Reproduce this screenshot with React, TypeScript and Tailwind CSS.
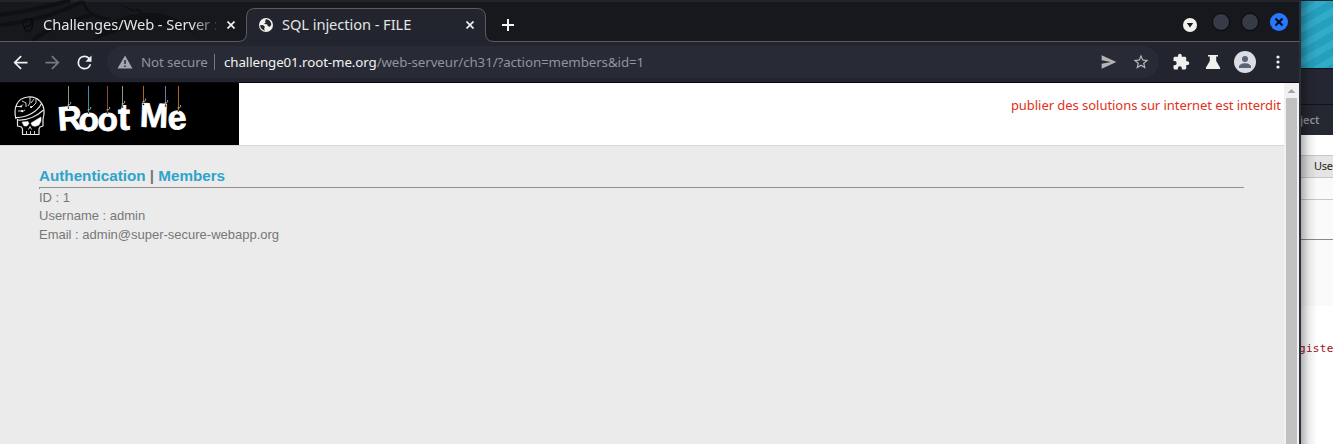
import type { ReactNode } from "react";

const HANGING = [
  { ch: "R", x: 58.5, y: 130.5, size: 33.5, rot: -4, sx: 68.5, sy: 107, color: "#7c9a86" },
  { ch: "o", x: 78.5, y: 131, size: 33.5, rot: 0, sx: 88.5, sy: 112, color: "#3f8da8" },
  { ch: "o", x: 97.5, y: 131, size: 33.5, rot: 0, sx: 107.5, sy: 112, color: "#8a4a35" },
  { ch: "t", x: 118, y: 130, size: 36, rot: 0, sx: 122.5, sy: 106, color: "#8b9a80" },
  { ch: "M", x: 139.5, y: 126.5, size: 34, rot: 2, sx: 143.5, sy: 103.5, color: "#b0651f" },
  { ch: "", x: 0, y: 0, size: 33, rot: 0, sx: 165.5, sy: 105, color: "#7f74a8" },
  { ch: "e", x: 168.5, y: 130, size: 34, rot: -5, sx: 178.5, sy: 110, color: "#b0651f" },
];

function Logo() {
  return (
    <svg width="239" height="62" viewBox="0 83 239 62" className="block shrink-0 bg-black">
      <g fill="none" stroke="#e8e8e8" strokeWidth="1.200" strokeLinejoin="round">
        <path d="M16 119C13 108 17 98 28 97c10-1 17 7 16 17l-1 5v7l-3 1-1 2v5.500H22.500V129l-1-2-4-1v-7" />
        <path d="M15.500 117.500C27 118 38 111 41.500 103.500M17.500 120C28 121 38 115 43.500 110" />
        <path d="M16 106.500h5l2-2m-5 6.500h5M22 101l4 2v4m4-10v6l-2 3m6-7l-3 4m5-5v5l-5 5m-9 4l3-2" strokeWidth=".9" />
        <path d="M26.500 134v-3m4 3v-3m4 3v-3M28.500 129.500l1.500-3 1.500 3" strokeWidth=".9" />
        <path d="M22 122l6-.5 1 2-2 2.500h-3zM31 123l10-6v4l-2 4-4 1.500-3-1z" fill="#fff" strokeWidth=".5" />
      </g>
      <g fill="#fff">
        <circle cx="21" cy="106.500" r="1" />
        <circle cx="22" cy="111" r="1" />
        <circle cx="31" cy="107" r="1" />
      </g>
      {HANGING.map((h, i) => (
        <g key={i}>
          <text x={h.x} y={h.y} fontSize={h.size} fill="#fff" stroke="#fff" strokeWidth=".8" fontWeight="700" className="font-['Liberation_Sans',sans-serif]" transform={`rotate(${h.rot} ${h.x} ${h.y})`}>{h.ch}</text>
          <path d={`M${h.sx} 86V${h.sy}`} stroke={h.color} />
          <path d={`M${h.sx - 1} ${h.sy - 2}q4 0 3-3`} stroke="#ccc" fill="none" strokeWidth=".8" />
          <circle cx={h.sx} cy={h.sy + 1} r=".8" fill="#000" />
        </g>
      ))}
    </svg>
  );
}

function Glyph({ size = 20, className = "", children }: { size?: number; className?: string; children: ReactNode }) {
  return <svg width={size} height={size} viewBox="0 0 24 24" fill="currentColor" className={`block shrink-0 ${className}`}>{children}</svg>;
}

function Close() {
  return (
    <svg width="8" height="8" viewBox="0 0 8 8" className="block shrink-0 text-[#f0f0ee]">
      <path d="M.5.5l7 7m0-7l-7 7" stroke="currentColor" strokeWidth="1.7" />
    </svg>
  );
}

function TabStrip() {
  return (
    <header className="relative h-[42px] bg-[#17181d]">
      <svg width="1300" height="42" className="absolute inset-0 block">
        <rect width="1300" height="2" fill="#23242a" />
        <g fill="none" stroke="#0f1013">
          <path d="M0 15Q42 9 70 0M0 25Q45 20 82 2M32 41Q53 24 92 15" strokeWidth="4" />
          <path d="M83 1Q87 18 111 19" strokeWidth="3" />
        </g>
        <path d="M112 21Q150 5 178 20L196 34Q158 15 93 40Q106 27 112 21ZM120 4l13 8 5-4 6 6" fill="#101114" />
        <path d="M0 41.5H238Q246.500 41.500 246.500 33V17Q246.500 8.500 255 8.500H477Q485.500 8.500 485.500 17V33Q485.500 41.500 494 41.500H1300V43H0Z" fill="#22242e" stroke="#5b5c60" />
        <path d="M0 41.500H238M494 41.500H1300" stroke="#5b5c60" />
      </svg>
      <div className="relative flex h-full items-center pt-2 font-['Noto_Sans',sans-serif] text-[14.67px] leading-5 text-[#e5e5e3]">
        <svg width="12" height="14" viewBox="0 0 12 14" className="ml-[22px] block shrink-0" fill="none" stroke="#08080a" strokeWidth="1.1"><path d="M2 9C-1 3 4 0 8 1c4 2 3 6 2 9l-2 3H4L2 9zm0 0c4 0 7-2 8-5" /></svg>
        <div className="mb-[2px] ml-[9px] w-[173px] overflow-hidden tracking-[-0.05px] whitespace-nowrap [mask-image:linear-gradient(to_right,black_148px,transparent_180px)]">Challenges/Web - Server :</div>
        <div className="ml-[11px]"><Close /></div>
        <svg width="14" height="14" viewBox="0 0 14 14" className="ml-[24px] block shrink-0"><circle cx="7" cy="7" r="7" fill="#f1f1ef" /><path d="M7 1.300l-1 2 .8 1-1.800 1.700 3 .2 1 2 2 .5 1.300-2c0-2-1-4-3-5zM1.300 7l3 .3L6 9l-1 1.500 1 2C3 12 1 9.800 1.300 7z" fill="#22242e" /></svg>
        <div className="mb-[2px] ml-[9px] w-[175px] tracking-[-0.07px] whitespace-nowrap">SQL injection - FILE</div>
        <div className="ml-[9px]"><Close /></div>
        <svg width="12" height="12" viewBox="0 0 12 12" className="ml-[28px] block shrink-0"><path d="M6 0v12M0 6h12" stroke="#f4f4f2" strokeWidth="2" /></svg>
      </div>
      <div className="absolute top-0 right-0 flex h-[44px] items-center gap-[11px] pr-[11px]">
        <svg width="14" height="14" viewBox="0 0 14 14" className="mt-[6px] mr-[4px] block"><circle cx="7" cy="7" r="7" fill="#f1f1ee" /><path d="M3.800 5h6.400L7 9.500z" fill="#17181d" /></svg>
        <div className="size-[18px] rounded-full border border-[#07080a] bg-[#363b47]" />
        <div className="size-[18px] rounded-full border border-[#07080a] bg-[#363b47]" />
        <svg width="18" height="18" viewBox="0 0 18 18" className="block"><circle cx="9" cy="9" r="9" fill="#2777ff" /><path d="M5.500 5.500l7 7m0-7l-7 7" stroke="#050d20" strokeWidth="2.200" /></svg>
      </div>
    </header>
  );
}

function Toolbar() {
  return (
    <div className="flex h-[41px] items-center border-b border-[#08090d] bg-[#22242e] font-['Noto_Sans',sans-serif] text-[13.33px] tracking-[-0.1px] whitespace-nowrap">
      <Glyph size={21} className="ml-[10px] text-[#f0f0ee]"><path d="M20 11H7.800l5.600-5.600L12 4l-8 8 8 8 1.400-1.400L7.800 13H20z" /></Glyph>
      <Glyph size={21} className="ml-[11px] text-[#77787d]"><path d="M4 13h12.200l-5.600 5.600L12 20l8-8-8-8-1.400 1.400 5.600 5.600H4z" /></Glyph>
      <Glyph size={21} className="ml-[11px] text-[#f0f0ee]"><path d="M17.650 6.350A7.960 7.960 0 0012 4a8 8 0 107.730 10h-2.080A6 6 0 1112 6c1.660 0 3.140.69 4.220 1.780L13 11h7V4z" /></Glyph>
      <div className="ml-[12px] flex h-8 w-[1052px] items-center rounded-full bg-[#282a36]">
        <svg width="16" height="14" viewBox="0 0 16 14" className="ml-[10px] block"><path d="M8 .5L15.500 13.500H.5z" fill="#a5a6ac" /><path d="M8 5v4m0 1.500V12" stroke="#282a36" strokeWidth="1.500" /></svg>
        <span className="mt-[2px] ml-2 w-[67px] text-[#92949c]">Not secure</span>
        <span className="ml-[6px] h-4 w-px bg-[#777980]" />
        <span className="mt-[2px] ml-[9px] text-[#92949c]"><span className="text-[#f3f3f1]">challenge01.root-me.org</span>/web-serveur/ch31/?action=members&amp;id=1</span>
        <Glyph size={16} className="ml-auto text-[#b5b5b5]"><path d="M1 22L23 12 1 2v7.500L15 12 1 14.500z" /></Glyph>
        <Glyph size={18} className="mr-[9px] ml-[15px] text-[#b9b9b9]"><path d="M22 9.240l-7.190-.62L12 2 9.190 8.630 2 9.240l5.460 4.730L5.820 21 12 17.270 18.180 21l-1.630-7.030L22 9.240zM12 15.400l-3.760 2.270 1-4.280-3.320-2.880 4.380-.38L12 6.100l1.710 4.040 4.380.38-3.320 2.880 1 4.280z" /></Glyph>
      </div>
      <Glyph size={18} className="ml-[13px] text-[#f0f0ee]"><path d="M20.500 11H19V7c0-1.100-.9-2-2-2h-4V3.500a2.500 2.500 0 00-5 0V5H4c-1.100 0-2 .9-2 2v3.800h1.500a2.700 2.700 0 010 5.400H2V20c0 1.100.9 2 2 2h3.800v-1.500a2.700 2.700 0 015.400 0V22H17c1.100 0 2-.9 2-2v-4h1.500a2.500 2.500 0 000-5z" /></Glyph>
      <svg width="16" height="16" viewBox="0 0 16 16" className="ml-[15px] block shrink-0"><path d="M3 1h10v1.500h-1.800V7L15 13.500c.5 1 0 1.500-.8 1.500H1.800c-.8 0-1.300-.5-.8-1.500L4.800 7V2.500H3z" fill="#f0f0ee" /></svg>
      <svg width="22" height="22" viewBox="0 0 22 22" className="ml-[13px] block shrink-0"><circle cx="11" cy="11" r="11" fill="#dadde3" /><circle cx="11" cy="8" r="3" fill="#596575" /><path d="M5 17v-1.500c0-2 3-3.300 6-3.300s6 1.300 6 3.300V17z" fill="#596575" /></svg>
      <svg width="4" height="14" viewBox="0 0 4 14" className="ml-[20px] block shrink-0" fill="#f0f0ee"><circle cx="2" cy="2" r="1.600" /><circle cx="2" cy="7" r="1.600" /><circle cx="2" cy="12" r="1.600" /></svg>
    </div>
  );
}

function Browser() {
  return (
    <div className="flex h-full w-[1301px] shrink-0 flex-col border-r-2 border-[#2b2f3a] bg-[#22242e]">
      <TabStrip />
      <Toolbar />
      <div className="flex min-h-0 flex-1">
        <main className="min-w-0 flex-1 bg-[#ebebeb] font-['Liberation_Sans',sans-serif] text-[13px] text-[#777]">
          <div className="flex h-[63px] justify-between border-b border-[#d8d8d8] bg-white">
            <Logo />
            <p className="mt-[12px] mr-[3px] font-['Noto_Sans',sans-serif] text-[13px] leading-5 tracking-[-0.045px] text-[#df3020]">publier des solutions sur internet est interdit</p>
          </div>
          <div className="pt-[21px] pr-[40px] pl-[39px]">
            <h1 className="h-[20px] text-[15.23px] leading-[18px] font-bold"><span className="text-[#2ea3cb]">Authentication</span> | <span className="text-[#2ea3cb]">Members</span></h1>
            <div className="h-[2px] border-t border-l border-[#929292]" />
            <p className="h-[18px] leading-[18px]">ID : 1</p>
            <p className="h-[19px] leading-[18px]">Username : admin</p>
            <p className="h-[18px] leading-[18px]">Email : admin@super-secure-webapp.org</p>
          </div>
        </main>
        <div className="w-[15px] bg-[#f1f1f1]">
          <svg width="15" height="15" viewBox="0 0 15 15" className="block"><path d="M3.500 10L7.500 6l4 4z" fill="#a3a3a3" /></svg>
          <div className="mx-[2px] h-full w-[11px] bg-[#c1c1c1]" />
        </div>
      </div>
    </div>
  );
}

function BackWindow() {
  return (
    <div className="relative h-full w-8 overflow-hidden bg-white font-['Noto_Sans',sans-serif]">
      <div className="h-[68px] border-t border-[#202229] bg-[repeating-linear-gradient(150deg,#24a0bf_0px,#24a0bf_7px,#32abc8_8px,#32abc8_14px)]" />
      <div className="h-[37px] border-y border-[#111319] bg-[#242631]" />
      <div className="flex h-[30px] items-center bg-[#252731] pl-px text-[11px] font-semibold text-[#8f929b]"><span className="-ml-[2px]">ject</span></div>
      <div className="h-[20px] bg-white" />
      <div className="flex h-[23px] items-center border-y border-[#c7c7c7] bg-[#e5e5e5] pl-[13px] text-[11px] tracking-[-0.3px] text-[#222]">User</div>
      <div className="h-[22px] border-b border-[#c7c7c7] bg-[#fafafa]" />
      <div className="h-[40px] border-b border-[#868790] bg-[#fafafa]" />
      <div className="h-[66px] bg-[#fafafa]" />
      <div className="-ml-[2px] pt-[36px] font-['DejaVu_Sans_Mono',monospace] text-[11px] leading-[14px] tracking-[0.3px] text-[#9b1015]">giste</div>
      <div className="absolute inset-y-0 left-0 w-4 bg-[linear-gradient(to_right,rgba(0,0,0,.3),rgba(0,0,0,.08)_50%,transparent)]" />
    </div>
  );
}

export default function App() {
  return (
    <div className="flex h-[444px] w-[1333px] overflow-hidden bg-[#17181d]">
      <Browser />
      <BackWindow />
    </div>
  );
}
